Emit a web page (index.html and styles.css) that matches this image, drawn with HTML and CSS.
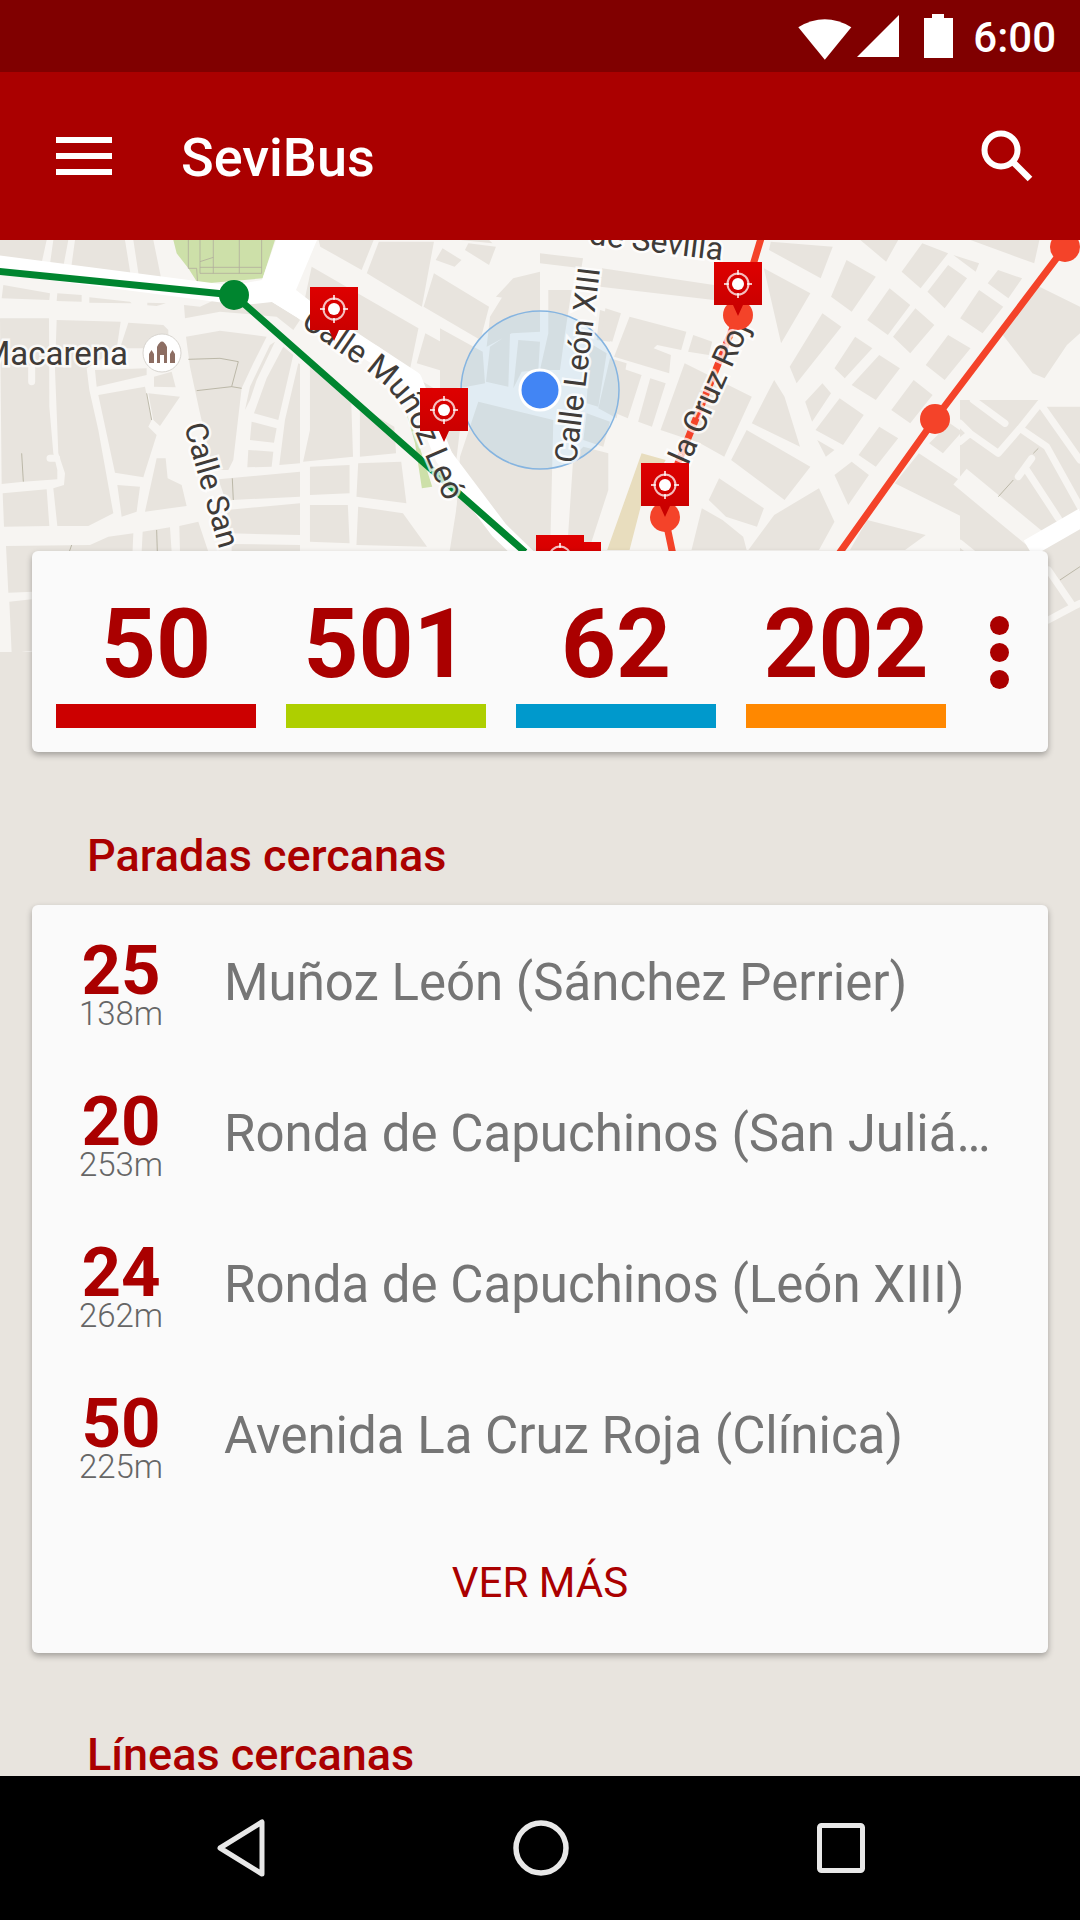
FILE: index.html
```html
<html>
  <head>
    <title>SeviBus</title>
    <link rel="stylesheet" href="styles.css">
  </head>
  <body>
    <div class="phone">
      <div class="status-bar">
        <svg class="status-icons" width="160" height="48" viewBox="0 0 160 48">
          <path d="M5 11 Q30 -6 55 11 L30 46Z" transform="translate(-5 3) scale(1.06 .93)" fill="#fff" />
          <path d="M101 1V43H59Z" fill="#fff" />
          <path d="M134 4V0H146V4H155V44H126V4Z" fill="#fff" />
        </svg>
        <span class="clock">6:00</span>
      </div>

      <header class="app-bar">
        <div class="burger"><i></i><i></i><i></i></div>
        <h1>SeviBus</h1>
        <svg class="search" width="54" height="54" viewBox="0 0 54 54">
          <circle cx="21" cy="21" r="16.5" fill="none" stroke="#fff" stroke-width="6" />
          <path d="M33 33 L50 50" stroke="#fff" stroke-width="6.5" />
        </svg>
      </header>

      <main class="content">
        <svg class="map" width="1080" height="412" viewBox="0 0 1080 412">
          <defs>
            <linearGradient id="pin" x1="0" y1="0" x2="0" y2="1">
              <stop offset="0" stop-color="#de0000" />
              <stop offset="1" stop-color="#c60000" />
            </linearGradient>
            <g id="marker">
              <path d="M0 0H48V43H29L24 54 19 43H0Z" fill="url(#pin)" />
              <circle cx="24" cy="22" r="10.5" fill="none" stroke="#fff" stroke-opacity=".75" stroke-width="2" />
              <circle cx="24" cy="22" r="6" fill="#fff" />
              <path d="M24 8V13M24 31V36M10 22H15M33 22H38" stroke="#fff" stroke-opacity=".75" stroke-width="2" />
            </g>
          </defs>
          <rect class="road-bg" width="1080" height="412" />

          <!-- far left, drawn at 3x -->
          <g transform="scale(.3333)">
            <path class="park" d="M520 0H825L788 115 595 132 565 85 530 40Z" />
            <path class="fine" d="M565 0V85H590L593 130M600 0V100H785M600 65L640 52M640 0V100M600 82H785M718 0V100M785 0V100" />
            <path class="block" d="M0 0H140L122 82 0 64ZM160 0H205L188 90 148 86ZM225 0H375L393 112 212 95ZM400 0H460L485 122 418 118ZM10 135L150 160 148 180 5 175ZM172 160L245 165V185L170 183ZM268 172L390 185 395 190 268 188ZM442 188L498 190 470 198 442 196ZM552 195L600 200 655 175 745 185 815 180 860 200 900 240 880 270 830 230 660 215 555 235ZM0 235H147L148 500 160 640 172 690V718L70 725 5 732ZM170 240L362 245 350 328 260 385 165 390ZM165 390L260 385 268 450 295 570 340 820 265 858H172L160 745 192 735 195 700 175 640ZM385 248L490 255 505 270V325L360 325ZM285 390L440 385V405L290 440ZM295 465L435 440 455 540 445 560 470 585 430 712 345 698ZM445 460L540 470 480 558 460 540ZM462 440V410L515 395 527 442ZM558 290L660 272 800 290 760 370 725 445 700 660 685 690H640L600 520 570 380ZM810 315L825 305 770 420 750 480 735 510 750 440ZM850 320L880 345 835 540 762 520 800 415ZM895 370L900 372V670L838 675 855 540ZM755 545L830 565 822 608 750 600ZM745 630L820 635 815 680 742 682ZM655 718L900 695V770L695 780 680 790ZM680 810L900 790V885L690 880ZM695 912L900 915V935H695ZM352 735L420 740 410 815 365 830ZM435 815L470 655H497L503 715 545 735 560 798ZM8 760L140 748 148 858 12 860ZM18 918L270 915 325 890 400 880 395 1000H100V1055L25 1058ZM428 875L510 862 515 935H425ZM538 858L595 845 625 935H540ZM28 1085L95 1078V1232L35 1240Z" />
            <path class="stub" d="M95 385V425M150 655H170" />
            <path class="fine" d="M565 358L660 355 715 365 695 440M590 452L695 440 725 445M440 460L455 540M65 640L70 725M697 715L700 780M470 870L472 935M215 915L208 935" />
          </g>

          <!-- centre, from x 300 on -->
          <g transform="translate(0 -10) scale(.3444 .3333)">
            <path class="park" d="M1180 550L1215 640 1255 770 1225 775 1205 640Z" />
            <path class="block" d="M900 400L1020 520 1025 680 880 695 900 600ZM1045 530L1145 590 1150 670 1045 680ZM1040 700L1165 695 1180 820 1035 800ZM900 710L1015 705V790L900 795ZM900 825H1010L1015 940 900 935ZM1040 830L1170 850 1240 950 1035 945ZM925 30H1085L1050 120 930 50ZM905 110L1215 295 1190 420 1100 350 880 230ZM1100 35H1260L1225 230 1065 130ZM1285 55L1340 90 1320 110 1265 90ZM1260 130L1420 230 1395 330 1230 230ZM1360 40L1440 50 1420 105 1350 60ZM1490 145L1568 125V220L1440 200ZM1235 310L1340 370 1340 440 1210 400ZM1290 30H1420L1430 40 1290 25ZM1220 450L1300 500 1340 560 1325 690 1260 570 1190 480ZM1340 740L1360 745 1350 1000H1300Z" />
          </g>

          <!-- around the accuracy circle, 3x from (440, 50) -->
          <g transform="translate(440 50) scale(.3333)">
            <path class="block" d="M115 335L340 390 330 800H40L60 500ZM150 170L210 130 205 290 138 275ZM235 150L300 155 295 240 245 245 220 295ZM325 0H395L375 130 360 240H300L325 130ZM200 0H300V125L215 130 140 170 150 80ZM0 115L128 185 135 280 80 290 0 300ZM480 60L530 75 510 155 470 150ZM450 160L500 190 475 350 440 340ZM510 205L560 220 530 385 475 355ZM440 370L510 395 490 470 430 450ZM430 470L505 490 505 600 440 800H380L400 500Z" />
          </g>

          <!-- right half -->
          <g transform="translate(540 -10) scale(.3444 .3333)">
            <path class="beige" d="M295 670L365 690 295 820 260 960 195 960Z" />
            <path class="block" d="M180 115L505 165V210L175 170ZM0 70L125 85 120 115 0 100ZM260 260L425 305 410 360 340 345 330 355 380 375 375 430 215 380ZM190 235L235 250 210 335 175 325ZM445 315L500 335 490 375 430 365ZM225 410L295 435 255 565 175 530ZM320 445L365 460 325 590 285 575ZM420 400L615 500 535 680 465 640 350 600ZM650 115L785 190 700 340ZM680 450L710 500 755 650 615 580ZM600 600L785 710 710 810 555 690ZM520 745L650 835 630 890 540 860 490 810ZM470 835L530 870 590 920 600 960H440ZM680 855L810 775 855 875 810 960H605ZM805 630L855 660 830 680ZM950 870L1120 915 1060 960H900ZM1100 670L1460 915 1420 960 1030 760ZM670 35L850 50 815 145 665 60ZM930 30H1040L1005 95ZM890 90L975 140 905 245 845 200ZM820 250L875 290 745 460 725 410ZM915 320L965 355 885 445 855 415ZM985 375L1045 415 975 510 905 465ZM1015 175L1075 225 1010 315 950 270ZM1090 235L1145 285 1075 370 1025 320ZM1110 40L1185 70 1105 175 1050 125ZM1185 105L1240 145 1175 235 1125 185ZM1330 120L1400 145 1360 205 1300 160ZM1275 180L1345 230 1285 310 1220 265ZM1185 315L1250 355 1175 450 1120 405ZM1085 450L1140 495 1075 580 1020 540ZM870 505L940 555 880 645 800 600ZM985 590L1040 625 975 710 925 675ZM820 460L845 490 790 575 770 515ZM905 695L955 735 895 825 855 735ZM1200 75L1275 100 1265 125ZM1250 30H1450L1435 100ZM1340 310L1440 165 1568 230V310L1530 345 1465 445 1430 430ZM1130 640L1190 580 1225 605 1170 670Z" />
          </g>

          <!-- far right, 3x from (960, 160) -->
          <g transform="translate(960 160) scale(.3333)">
            <rect class="block" width="360" height="756" />
            <path class="stub wide" d="M0 230L230 420" />
            <path class="stub" d="M40 0L135 70M0 70L30 100 115 160 180 85 240 10H360M180 85L260 140 360 320M240 10L360 180M175 230L215 175M200 210L295 355M265 510L340 620 265 660M340 620L360 610M0 125L30 100M0 430L50 470" />
            <path class="major-lane" d="M205 445L370 350" />
            <path class="fine" d="M115 290L160 240M220 160L235 145M300 540L360 500" />
          </g>

          <g class="major">
            <path d="M-5 24L234 55" />
            <path d="M270 50L358 104 413 140 444 217 499 290 540 330" />
          </g>
          <path class="major-fill" d="M276 0H317L296 50 345 88 330 98 272 62 234 66V45L262 40Z" />
          <path class="line green" d="M-5 31L234 55 525 312" />
          <circle class="green-node" cx="234" cy="55" r="15" />
          <path class="line red" d="M762 -5L738 75 678 223 665 277 673 315" />
          <path class="line red" d="M1065 7L935 179 838 315" />

          <circle class="accuracy" cx="540" cy="150" r="79" />

          <g class="labels">
            <text class="macarena" x="128" y="125">Macarena</text>
            <text class="small-label" transform="translate(184 186) rotate(74)">Calle San</text>
            <text><textPath href="#munoz">Calle Muñoz León</textPath></text>
            <path id="munoz" class="guide" d="M300 85L365 130Q395 150 410 180L447 266" />
            <text class="small-label" transform="translate(576 224) rotate(-83)">Calle León XIII</text>
            <text transform="translate(688 226) rotate(-66)">la Cruz Roj</text>
            <text transform="translate(588 4) rotate(7)">de Sevilla</text>
          </g>

          <circle class="poi" cx="162" cy="113" r="19" />
          <path class="poi-glyph" d="M149 123V114L151.5 110 154 114V123ZM157 123V107Q162 96 167 107V123H164V115H160V123ZM170 123V114L172.5 110 175 114V123Z" />

          <circle class="red-node" cx="738" cy="75" r="15" />
          <circle class="red-node" cx="665" cy="277" r="15" />
          <circle class="red-node" cx="935" cy="179" r="15" />
          <circle class="red-node" cx="1065" cy="7" r="15" />

          <circle class="me" cx="540" cy="150" r="20" />

          <use href="#marker" x="310" y="47" />
          <use href="#marker" x="420" y="148" />
          <use href="#marker" x="714" y="22" />
          <use href="#marker" x="641" y="223" />
          <use href="#marker" x="553" y="302" />
          <use href="#marker" x="536" y="295" />
        </svg>

        <section class="card lines-card">
          <div class="fav">
            <span class="fav-num">50</span>
            <span class="fav-bar red-bar"></span>
          </div>
          <div class="fav">
            <span class="fav-num">501</span>
            <span class="fav-bar green-bar"></span>
          </div>
          <div class="fav">
            <span class="fav-num">62</span>
            <span class="fav-bar blue-bar"></span>
          </div>
          <div class="fav">
            <span class="fav-num">202</span>
            <span class="fav-bar orange-bar"></span>
          </div>
          <div class="more"><i></i><i></i><i></i></div>
        </section>

        <h2 class="section-title">Paradas cercanas</h2>
        <section class="card stops-card">
          <div class="stop">
            <div class="stop-code"><b>25</b><span>138m</span></div>
            <div class="stop-name">Muñoz León (Sánchez Perrier)</div>
          </div>
          <div class="stop">
            <div class="stop-code"><b>20</b><span>253m</span></div>
            <div class="stop-name">Ronda de Capuchinos (San Julián)</div>
          </div>
          <div class="stop">
            <div class="stop-code"><b>24</b><span>262m</span></div>
            <div class="stop-name">Ronda de Capuchinos (León XIII)</div>
          </div>
          <div class="stop">
            <div class="stop-code"><b>50</b><span>225m</span></div>
            <div class="stop-name">Avenida La Cruz Roja (Clínica)</div>
          </div>
          <div class="see-more">VER MÁS</div>
        </section>

        <h2 class="section-title second">Líneas cercanas</h2>
      </main>

      <nav class="nav-bar">
        <svg width="48" height="58" viewBox="0 0 48 58">
          <path d="M45 3V55L3 29Z" fill="none" stroke="#e8e8e8" stroke-width="5" stroke-linejoin="round" />
        </svg>
        <svg width="56" height="56" viewBox="0 0 56 56">
          <circle cx="28" cy="28" r="25" fill="none" stroke="#e8e8e8" stroke-width="5.5" />
        </svg>
        <svg width="48" height="50" viewBox="0 0 48 50">
          <rect x="2.5" y="2.5" width="43" height="45" rx="2" fill="none" stroke="#e8e8e8" stroke-width="5" />
        </svg>
      </nav>
    </div>
  </body>
</html>
```

FILE: styles.css
```css
* {
  box-sizing: border-box;
}
body {
  margin: 0;
  font-family: Roboto, "Noto Sans", sans-serif;
}
.phone {
  width: 1080px;
  height: 1920px;
  display: flex;
  flex-direction: column;
  overflow: hidden;
  background: #e8e4de;
}

/* status bar */
.status-bar {
  height: 72px;
  background: #800000;
  display: flex;
  align-items: center;
  justify-content: flex-end;
  padding-right: 24px;
  color: #fff;
}
.status-icons {
  margin-right: 15px;
  margin-top: 3px;
}
.clock {
  font-size: 42px;
  font-weight: 500;
  margin-top: 2px;
}

/* app bar */
.app-bar {
  height: 168px;
  background: #aa0000;
  display: flex;
  align-items: center;
  padding: 0 46px 0 56px;
  color: #fff;
}
.burger {
  width: 56px;
  display: flex;
  flex-direction: column;
  gap: 10px;
  margin-top: -1px;
}
.burger i {
  height: 6px;
  background: #fff;
}
.app-bar h1 {
  flex: 1;
  margin: 2px 0 0 69px;
  font-size: 54px;
  font-weight: 500;
}

/* map */
.content {
  flex: 1;
  overflow: hidden;
}
.map {
  display: block;
}
.road-bg {
  fill: #f7f5f2;
}
.block {
  fill: #e8e4de;
}
.park {
  fill: #cde0a9;
}
.fine {
  fill: none;
  stroke: #b2ae9c;
  stroke-width: 2.5;
}
.beige {
  fill: #e8ddbe;
}
.stub {
  fill: none;
  stroke: #f7f5f2;
  stroke-width: 21;
  stroke-linecap: round;
  stroke-linejoin: round;
}
.stub.wide {
  stroke-width: 62;
  stroke-linecap: butt;
}
.major-lane {
  fill: none;
  stroke: #fff;
  stroke-width: 55;
}
.major {
  fill: none;
  stroke: #fff;
  stroke-width: 18;
  stroke-linejoin: round;
}
.major-fill {
  fill: #fff;
}
.line {
  fill: none;
  stroke-width: 7;
  stroke-linejoin: round;
}
.green {
  stroke: #00852f;
}
.green-node {
  fill: #00852f;
}
.red {
  stroke: #f44329;
}
.red-node {
  fill: #f44329;
}
.accuracy {
  fill: rgba(100, 188, 248, 0.15);
  stroke: #85b4e0;
  stroke-width: 1.5;
}
.me {
  fill: #4285f4;
  stroke: #fff;
  stroke-width: 3;
}
.labels text {
  font-size: 32px;
  fill: #3f3b38;
  stroke: #fff;
  stroke-opacity: 0.75;
  stroke-width: 5px;
  paint-order: stroke;
}
.labels .macarena {
  font-size: 33px;
  text-anchor: end;
}
.labels .small-label {
  font-size: 31px;
}
.guide {
  fill: none;
}
.poi {
  fill: #fff;
  stroke: #d8d5d0;
  stroke-width: 1;
}
.poi-glyph {
  fill: #8d6e63;
}

/* cards */
.card {
  background: #fafafa;
  border-radius: 6px;
  box-shadow: 0 3px 6px rgba(0, 0, 0, 0.3);
  margin: 0 32px;
  position: relative;
}
.lines-card {
  margin-top: -101px;
  height: 201px;
  padding: 45px 0 0 24px;
  display: flex;
  gap: 30px;
}
.fav {
  width: 200px;
  display: flex;
  flex-direction: column;
  align-items: center;
}
.fav-num {
  font-size: 96px;
  line-height: 96px;
  font-weight: 700;
  color: #aa0000;
}
.fav-bar {
  width: 100%;
  height: 24px;
  margin-top: 12px;
}
.red-bar {
  background: #cc0000;
}
.green-bar {
  background: #aecf00;
}
.blue-bar {
  background: #0099cc;
}
.orange-bar {
  background: #ff8800;
}
.more {
  display: flex;
  flex-direction: column;
  gap: 8px;
  margin: 20px 0 0 14px;
}
.more i {
  width: 19px;
  height: 19px;
  border-radius: 50%;
  background: #aa0000;
}

.section-title {
  margin: 80px 0 25px 87px;
  font-size: 45px;
  line-height: 48px;
  font-weight: 500;
  color: #aa0000;
}
.section-title.second {
  margin-top: 78px;
}

/* stop list */
.stops-card {
  height: 748px;
  padding: 2px 56px 0 47px;
}
.stop {
  height: 151px;
  display: flex;
  align-items: center;
}
.stop-code {
  width: 84px;
  flex: none;
  display: flex;
  flex-direction: column;
  align-items: center;
  margin: 10px 61px 0 0;
}
.stop-code b {
  font-size: 69px;
  line-height: 52px;
  color: #aa0000;
}
.stop-code span {
  font-size: 33px;
  line-height: 34px;
  font-weight: 300;
  color: #666;
}
.stop-name {
  font-size: 51px;
  color: #757575;
  white-space: nowrap;
  overflow: hidden;
  text-overflow: ellipsis;
}
.see-more {
  margin: 47px 0 0 9px;
  text-align: center;
  font-size: 42px;
  color: #aa0000;
}

/* nav */
.nav-bar {
  height: 144px;
  background: #000;
  display: flex;
  align-items: center;
  padding-left: 217px;
  gap: 248px;
}
```
